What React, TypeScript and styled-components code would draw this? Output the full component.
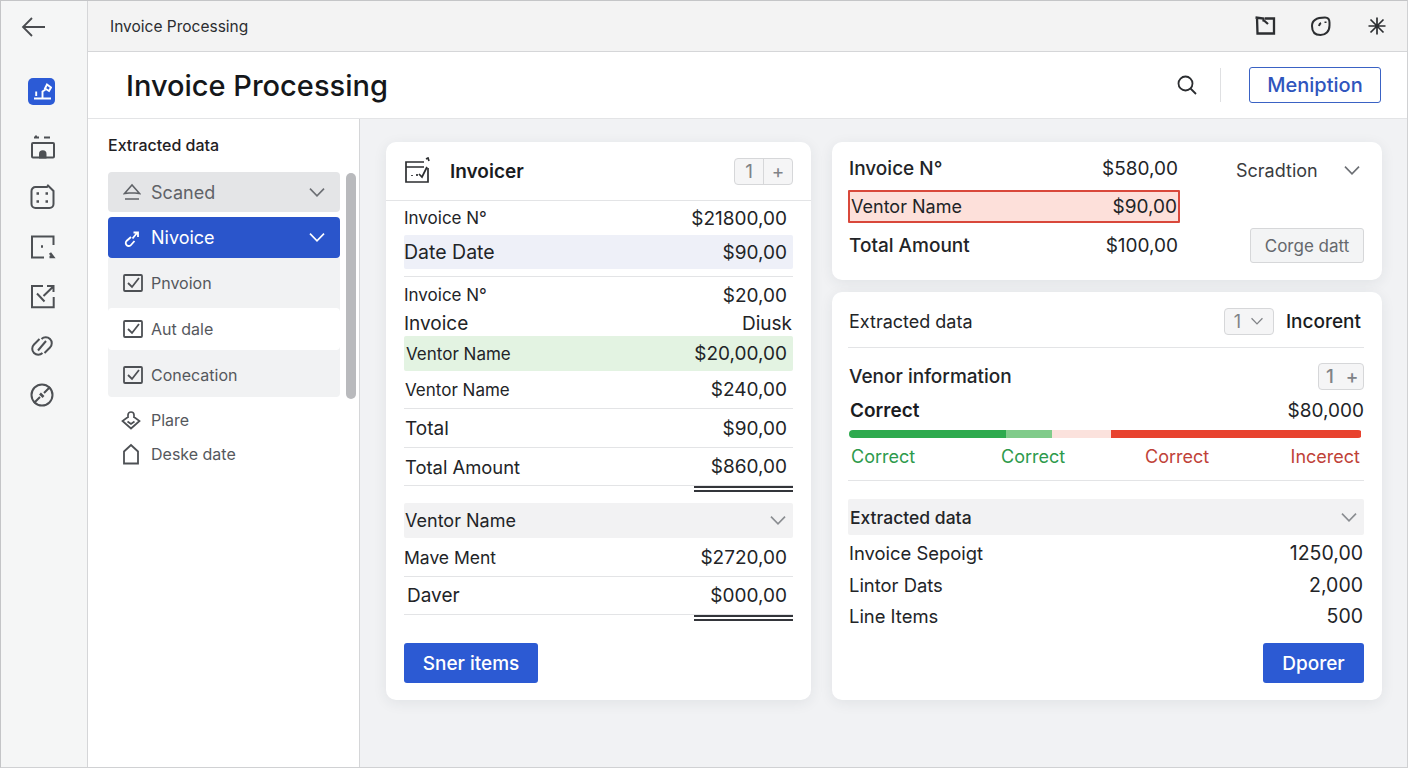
import React from "react";
import styled, { createGlobalStyle } from "styled-components";

const GlobalStyle = createGlobalStyle`
  html, body { margin: 0; padding: 0; height: 100%; }
  body { font-family: Inter, "Liberation Sans", sans-serif; color: #222427; background: #f1f2f4; }
  #root { height: 100%; }
  * { box-sizing: border-box; }
`;

const Frame = styled.div`
  width: 1408px;
  height: 768px;
  display: flex;
  overflow: hidden;
  border-top: 1px solid #c4c5c7;
  border-left: 1px solid #c4c5c7;
  border-right: 1px solid #d0d1d3;
  border-bottom: 1px solid #d0d1d3;
`;

const Rail = styled.aside`
  width: 87px;
  flex: none;
  background: #f5f6f6;
  border-right: 1px solid #d5d6d8;
  display: flex;
  flex-direction: column;
`;

const BackSlot = styled.div`
  height: 51px;
  padding-left: 20px;
  display: flex;
  align-items: center;
`;

const RailList = styled.nav`
  padding-top: 15px;
  padding-left: 27px;
  display: flex;
  flex-direction: column;
`;

const RailItem = styled.div<{ $lead?: boolean }>`
  height: 49.4px;
  margin-bottom: ${(p) => (p.$lead ? "7px" : "0")};
  display: flex;
  align-items: center;
`;

const RailTile = styled.div`
  width: 27px;
  height: 27px;
  border-radius: 5px;
  background: #2c5bd6;
  display: flex;
  align-items: center;
  justify-content: center;
`;

const Body = styled.div`
  flex: 1;
  min-width: 0;
  display: flex;
  flex-direction: column;
`;

const TopBar = styled.header`
  height: 51px;
  flex: none;
  background: #f3f3f3;
  border-bottom: 1px solid #d5d6d8;
  display: flex;
  align-items: center;
  justify-content: space-between;
  padding: 0 18px 0 22px;
  font-size: 15.5px;
  color: #2b2d30;
`;

const TopIcons = styled.div`
  display: flex;
  align-items: center;
  gap: 32px;
`;

const TitleBar = styled.div`
  height: 67px;
  flex: none;
  background: #fff;
  border-bottom: 1px solid #e3e4e6;
  display: flex;
  align-items: center;
  justify-content: space-between;
  padding: 0 26px 0 38px;
`;

const PageTitle = styled.h1`
  margin: 0;
  font-size: 29px;
  font-weight: 500;
  color: #15171a;
`;

const TitleTools = styled.div`
  display: flex;
  align-items: center;
`;

const ToolDivider = styled.div`
  width: 1px;
  height: 34px;
  background: #dfe0e2;
  margin: 0 28px 0 22px;
`;

const OutlineButton = styled.button`
  width: 132px;
  height: 36px;
  padding-bottom: 2px;
  border: 1px solid #3a62c4;
  border-radius: 3px;
  background: #fff;
  color: #2f55bd;
  font: 500 20px Inter, sans-serif;
`;

const Content = styled.div`
  flex: 1;
  min-height: 0;
  display: flex;
`;

const SidePanel = styled.section`
  width: 272px;
  flex: none;
  background: #fff;
  border-right: 1px solid #d5d6d8;
  padding: 16px 3px 0 20px;
`;

const SideHeading = styled.h2`
  margin: 0 0 17px;
  height: 20px;
  line-height: 20px;
  font-size: 16px;
  font-weight: 500;
  color: #1f2124;
`;

const SideColumns = styled.div`
  display: flex;
  gap: 6px;
  align-items: flex-start;
`;

const SideList = styled.div`
  width: 232px;
`;

const ScrollThumb = styled.div`
  width: 10px;
  height: 226px;
  margin-top: 1px;
  border-radius: 5px;
  background: #b9babd;
`;

const Select = styled.div<{ $active?: boolean }>`
  height: ${(p) => (p.$active ? "41px" : "40px")};
  margin-bottom: ${(p) => (p.$active ? "0" : "5px")};
  padding: 0 14px 0 15px;
  border-radius: 4px;
  display: flex;
  align-items: center;
  gap: 10px;
  font-size: 18px;
  background: ${(p) => (p.$active ? "#2a55cb" : "#e4e5e7")};
  color: ${(p) => (p.$active ? "#fff" : "#5f6267")};
`;

const Grow = styled.span`
  flex: 1;
`;

const CheckGroup = styled.div`
  height: 139px;
  padding-top: 4px;
  background: #f1f2f3;
  border-radius: 0 0 4px 4px;
  display: flex;
  flex-direction: column;
`;

const CheckRow = styled.div<{ $on?: boolean }>`
  height: 42px;
  margin: ${(p) => (p.$on ? "4px 0" : "0")};
  padding-left: 15px;
  border-radius: 4px;
  display: flex;
  align-items: center;
  gap: 8px;
  font-size: 16px;
  color: #55585d;
  background: ${(p) => (p.$on ? "#fff" : "transparent")};
`;

const PlainRow = styled.div<{ $gap: number }>`
  height: 30px;
  margin-top: ${(p) => p.$gap}px;
  padding-left: 13px;
  display: flex;
  align-items: center;
  gap: 10px;
  font-size: 16px;
  color: #55585d;
`;

const Main = styled.main`
  flex: 1;
  min-width: 0;
  padding: 23px 0 0 26px;
  display: grid;
  grid-template-columns: 425px 550px;
  grid-template-rows: 558px;
  gap: 21px;
  background: #f1f2f4;
`;

const Card = styled.section`
  background: #fff;
  border-radius: 10px;
  box-shadow: 0 3px 14px rgba(40, 50, 70, 0.08);
`;

const InvoiceCard = styled(Card)`
  padding: 0 18px;
`;

const InvoiceHeader = styled.div`
  height: 59px;
  margin: 0 -18px;
  padding: 0 18px;
  border-bottom: 1px solid #e3e4e6;
  display: flex;
  align-items: center;
`;

const InvoiceTitle = styled.h2`
  margin: 0 0 0 18px;
  flex: 1;
  font-size: 19px;
  font-weight: 600;
  color: #1a1c1f;
`;

const Stepper = styled.div<{ $w: number }>`
  width: ${(p) => p.$w}px;
  height: 27px;
  border: 1px solid #d6d7d9;
  border-radius: 4px;
  background: #f5f5f6;
  display: flex;
  align-items: center;
  color: #808387;
  font-size: 19px;
`;

const StepCell = styled.span<{ $line?: boolean }>`
  flex: 1;
  height: 100%;
  display: flex;
  align-items: center;
  justify-content: center;
  border-right: ${(p) => (p.$line ? "1px solid #d6d7d9" : "0")};
`;

const Row = styled.div<{
  $h: number;
  $bg?: string;
  $line?: boolean;
  $size?: number;
  $weight?: number;
  $pl?: number;
  $pr?: number;
}>`
  height: ${(p) => p.$h}px;
  padding: 0 ${(p) => p.$pr ?? 6}px 0 ${(p) => p.$pl ?? 0}px;
  display: flex;
  align-items: center;
  justify-content: space-between;
  font-size: ${(p) => p.$size ?? 17}px;
  font-weight: ${(p) => p.$weight ?? 400};
  color: #222427;
  background: ${(p) => p.$bg ?? "transparent"};
  border-bottom: ${(p) => (p.$line ? "1px solid #e3e4e6" : "0")};
  border-radius: ${(p) => (p.$bg ? "2px" : "0")};
`;

const Amount = styled.span<{ $size?: number }>`
  font-size: ${(p) => p.$size ?? 19}px;
  font-weight: 400;
`;

const Spacer = styled.div<{ $h: number }>`
  height: ${(p) => p.$h}px;
`;

const Divider = styled.div`
  height: 1px;
  background: #e3e4e6;
`;

const DoubleRule = styled.div`
  width: 99px;
  height: 6px;
  margin-left: auto;
  border-top: 2px solid #33353a;
  border-bottom: 2px solid #33353a;
`;

const SolidButton = styled.button<{ $w: number }>`
  width: ${(p) => p.$w}px;
  height: 40px;
  border: 0;
  border-radius: 3px;
  background: #2c5ad3;
  color: #fff;
  font: 500 19px Inter, sans-serif;
`;

const RightColumn = styled.div`
  display: flex;
  flex-direction: column;
  gap: 12px;
  min-height: 0;
`;

const SummaryCard = styled(Card)`
  height: 138px;
  padding: 10px 18px 0 16px;
  display: grid;
  grid-template-columns: 332px 1fr;
  column-gap: 56px;
`;

const SummaryLeft = styled.div`
  display: flex;
  flex-direction: column;
`;

const SummaryRight = styled.div`
  display: flex;
  flex-direction: column;
  align-items: flex-end;
`;

const AlertRow = styled(Row)`
  margin-top: 5px;
  background: #fde0da;
  border: 2px solid #d9483b;
  border-radius: 1px;
  padding: 0 1px;
`;

const ScopeRow = styled.div`
  width: 100%;
  height: 36px;
  padding-right: 3px;
  display: flex;
  align-items: center;
  justify-content: space-between;
  font-size: 18px;
  color: #3a3c40;
`;

const GhostButton = styled.button`
  width: 114px;
  height: 35px;
  margin-top: 40px;
  border: 1px solid #d6d7d9;
  border-radius: 3px;
  background: #f3f4f5;
  color: #65686d;
  font: 400 17px Inter, sans-serif;
`;

const DetailCard = styled(Card)`
  flex: 1;
  padding: 0 18px 0 16px;
  display: flex;
  flex-direction: column;
`;

const DetailHead = styled.div`
  height: 56px;
  padding: 3px 3px 0 1px;
  border-bottom: 1px solid #e3e4e6;
  display: flex;
  align-items: center;
  gap: 10px;
  font-size: 18px;
`;

const DetailHeadLabel = styled.span`
  flex: 1;
`;

const Pill = styled.div`
  width: 50px;
  height: 27px;
  margin-right: 2px;
  border: 1px solid #d6d7d9;
  border-radius: 4px;
  background: #f5f5f6;
  display: flex;
  align-items: center;
  justify-content: space-evenly;
  color: #808387;
  font-size: 18px;
`;

const Strong = styled.span`
  font-size: 19px;
  font-weight: 500;
  color: #1a1c1f;
`;

const StrongLabel = styled.span`
  font-weight: 600;
  color: #1a1c1f;
`;

const Meter = styled.div`
  height: 8px;
  margin: 6px 2px 0 1px;
  border-radius: 4px;
  overflow: hidden;
  display: flex;
`;

const MeterPart = styled.div<{ $w: number; $c: string }>`
  width: ${(p) => p.$w}px;
  background: ${(p) => p.$c};
`;

const MeterLabels = styled.div`
  height: 43px;
  padding: 8px 4px 0 3px;
  border-bottom: 1px solid #e3e4e6;
  display: flex;
  align-items: flex-start;
  font-size: 18px;
`;

const MeterLabel = styled.span<{ $w?: number; $c: string }>`
  width: ${(p) => (p.$w ? `${p.$w}px` : "auto")};
  flex: ${(p) => (p.$w ? "none" : "1")};
  text-align: ${(p) => (p.$w ? "left" : "right")};
  color: ${(p) => p.$c};
`;

const DetailFoot = styled.div`
  display: flex;
  justify-content: flex-end;
  margin-top: 9px;
`;

const BackIcon = () => (
  <svg width="25" height="22" viewBox="0 0 25 22" fill="none" stroke="#4a4c50" strokeWidth="1.8">
    <path d="M24 11H2M11 2l-9 9 9 9" />
  </svg>
);

const Chevron = ({ color = "#6c6f74", size = 18 }: { color?: string; size?: number }) => (
  <svg width={size} height={size * 0.6} viewBox="0 0 16 10" fill="none" stroke={color} strokeWidth="1.5">
    <path d="M1.5 1.5 8 8.2l6.5-6.7" />
  </svg>
);

const RailIcon = ({ children }: { children: React.ReactNode }) => (
  <svg width="28" height="28" viewBox="0 0 28 28" fill="none" stroke="#4d5054" strokeWidth="2">
    {children}
  </svg>
);

const CheckIcon = () => (
  <svg width="20" height="18" viewBox="0 0 20 18" fill="none" stroke="#4d5054" strokeWidth="1.8">
    <rect x="1" y="1" width="18" height="16" rx="1" />
    <path d="M5 9l4 4 7-9" />
  </svg>
);

const App: React.FC = () => {
  return (
    <>
      <GlobalStyle />
      <Frame>
        <Rail>
          <BackSlot>
            <BackIcon />
          </BackSlot>
          <RailList>
            <RailItem $lead>
              <RailTile>
                <svg width="20" height="20" viewBox="0 0 20 20" fill="none" stroke="#fff" strokeWidth="1.9">
                  <path d="M2 16.5h17M10.5 16V9.5l3-2M4.2 14V9.500" />
                  <path d="M15 2.500l4 3-2 3.500-4-2.500z" />
                </svg>
              </RailTile>
            </RailItem>
            <RailItem>
              <RailIcon>
                <rect x="4" y="9" width="22" height="14.500" rx="1" />
                <path d="M6 3.500h5M8 1.500v2M16 3.500h6" />
                <path d="M12 23.500v-3.500a2.500 2.500 0 0 1 5.500 0v3.500z" fill="#4d5054" />
              </RailIcon>
            </RailItem>
            <RailItem>
              <RailIcon>
                <path d="M7.500 4h11.500l1-1.500 5.500 5.500V21a4 4 0 0 1-4 4H7.500a4 4 0 0 1-4-4V8a4 4 0 0 1 4-4z" />
                <path d="M8.500 10.500h2.500M17.500 10.500H20M8.500 18.500h2.500M17.500 18.500H20" strokeWidth="2.600" />
              </RailIcon>
            </RailItem>
            <RailItem>
              <RailIcon>
                <path d="M16 24.500H4V3.500h21.500V12" />
                <path d="M13 13.500h2" strokeWidth="2.600" />
                <path d="M22 20l3 4h-3.500" strokeWidth="2.600" />
              </RailIcon>
            </RailItem>
            <RailItem>
              <RailIcon>
                <path d="M15 4H4v21.300h21.700V15" />
                <path d="M15.500 14 25 4.700M19 4h6.500v6M9 11.500l7.500 8" />
              </RailIcon>
            </RailItem>
            <RailItem>
              <RailIcon>
                <path d="M11.500 7 6 12.500a6 6 0 0 0 8.500 8.500" />
                <path d="M16.500 21 22 15.500A6 6 0 0 0 13.500 7" />
                <path d="M10 18.500 18 9" />
              </RailIcon>
            </RailItem>
            <RailItem>
              <RailIcon>
                <circle cx="14" cy="14" r="10.500" />
                <path d="M22 6l-6 6M12 16l-6 6" />
                <path d="M12 12.500l3.500 3.500" strokeWidth="2.600" />
              </RailIcon>
            </RailItem>
          </RailList>
        </Rail>
        <Body>
          <TopBar>
            <span>Invoice Processing</span>
            <TopIcons>
              <svg width="24" height="24" viewBox="0 0 24 24" fill="none" stroke="#2c2e31" strokeWidth="2.300">
                <path d="M2.500 3.500l8 1v3M4 3.500l.5 16H21V11" />
                <path d="M12 4.500h9V11M11 6.500l4 3.500" />
              </svg>
              <svg width="24" height="24" viewBox="0 0 24 24" fill="none" stroke="#2c2e31" strokeWidth="2">
                <path d="M16 3.500c3 0 4.500 2 4.500 5v3c0 6-4 9.500-9 9.500S3 18 3 12s4-8.500 13-8.500z" />
                <path d="M10 12c.3-1.500 1-2.500 2-3M16.500 7.500V9" />
              </svg>
              <svg width="24" height="24" viewBox="0 0 24 24" fill="none" stroke="#2c2e31" strokeWidth="1.700">
                <path d="M12 3.500v17M3.500 12h17M5.500 5.500l13 13M18.500 5.500l-13 13" />
              </svg>
            </TopIcons>
          </TopBar>
          <TitleBar>
            <PageTitle>Invoice Processing</PageTitle>
            <TitleTools>
              <svg width="22" height="22" viewBox="0 0 22 22" fill="none" stroke="#2b2d30" strokeWidth="1.800">
                <circle cx="9.500" cy="9.500" r="7" />
                <path d="M14.500 14.500 20 20" />
              </svg>
              <ToolDivider />
              <OutlineButton>Meniption</OutlineButton>
            </TitleTools>
          </TitleBar>
          <Content>
            <SidePanel>
              <SideHeading>Extracted data</SideHeading>
              <SideColumns>
                <SideList>
                  <Select>
                    <svg width="18" height="18" viewBox="0 0 18 18" fill="none" stroke="#5f6267" strokeWidth="1.500">
                      <path d="M1.500 10.500 9 2l7.500 8.500-4.500-.5H6zM2 16h14" />
                    </svg>
                    <Grow>Scaned</Grow>
                    <Chevron />
                  </Select>
                  <Select $active>
                    <svg width="18" height="18" viewBox="0 0 18 18" fill="none" stroke="#fff" strokeWidth="1.800">
                      <path d="M8 8 3.500 12a3 3 0 0 0 4.500 4l3.500-4" />
                      <path d="M10.500 3.500H15V8M9.500 9.500 14 4" />
                    </svg>
                    <Grow>Nivoice</Grow>
                    <Chevron color="#fff" />
                  </Select>
                  <CheckGroup>
                    <CheckRow>
                      <CheckIcon />
                      Pnvoion
                    </CheckRow>
                    <CheckRow $on>
                      <CheckIcon />
                      Aut dale
                    </CheckRow>
                    <CheckRow>
                      <CheckIcon />
                      Conecation
                    </CheckRow>
                  </CheckGroup>
                  <PlainRow $gap={8}>
                    <svg width="20" height="20" viewBox="0 0 20 20" fill="none" stroke="#4d5054" strokeWidth="1.700">
                      <path d="M7 8V5a3 3 0 0 1 6 0v3M7 7l-5.500 4L10 18.500l8.500-7.500L13 7M6.500 11.500 10 14l3.500-2.500" />
                    </svg>
                    Plare
                  </PlainRow>
                  <PlainRow $gap={4}>
                    <svg width="20" height="22" viewBox="0 0 20 22" fill="none" stroke="#4d5054" strokeWidth="1.800">
                      <path d="M3 20.500V8.500l7-6.500 7 6.500v12z" />
                    </svg>
                    Deske date
                  </PlainRow>
                </SideList>
                <ScrollThumb />
              </SideColumns>
            </SidePanel>
            <Main>
              <InvoiceCard>
                <InvoiceHeader>
                  <svg width="28" height="28" viewBox="0 0 28 28" fill="none" stroke="#2c2e31" strokeWidth="1.700">
                    <path d="M20 5H2v20h22V11" />
                    <path d="M2 10h18M8 19v-1M13 19v-2M15 17l3 3 5-10M22 2l2-1 1 3" />
                  </svg>
                  <InvoiceTitle>Invoicer</InvoiceTitle>
                  <Stepper $w={59}>
                    <StepCell $line>1</StepCell>
                    <StepCell>+</StepCell>
                  </Stepper>
                </InvoiceHeader>
                <Row $h={34}>
                  <span>Invoice N°</span>
                  <Amount>$21800,00</Amount>
                </Row>
                <Row $h={34} $bg="#eef0f8" $size={19.500}>
                  <span>Date Date</span>
                  <Amount>$90,00</Amount>
                </Row>
                <Spacer $h={7} />
                <Divider />
                <Row $h={36}>
                  <span>Invoice N°</span>
                  <Amount>$20,00</Amount>
                </Row>
                <Row $h={20} $size={19} $pr={1}>
                  <span>Invoice</span>
                  <span>Diusk</span>
                </Row>
                <Spacer $h={3} />
                <Row $h={35} $bg="#e3f3e2" $pl={2}>
                  <span>Ventor Name</span>
                  <Amount>$20,00,00</Amount>
                </Row>
                <Row $h={38} $line $pl={1}>
                  <span>Ventor Name</span>
                  <Amount>$240,00</Amount>
                </Row>
                <Row $h={39} $line $size={19} $pl={1}>
                  <span>Total</span>
                  <Amount>$90,00</Amount>
                </Row>
                <Row $h={38} $line $size={18.400} $pl={1}>
                  <span>Total Amount</span>
                  <Amount>$860,00</Amount>
                </Row>
                <DoubleRule />
                <Spacer $h={11} />
                <Row $h={35} $bg="#f2f2f3" $size={18} $pl={1}>
                  <span>Ventor Name</span>
                  <Chevron color="#8a8d91" />
                </Row>
                <Row $h={39} $line $size={17.500}>
                  <span>Mave Ment</span>
                  <Amount>$2720,00</Amount>
                </Row>
                <Row $h={38} $line $size={19} $pl={3}>
                  <span>Daver</span>
                  <Amount>$000,00</Amount>
                </Row>
                <DoubleRule />
                <Spacer $h={22} />
                <SolidButton $w={134}>Sner items</SolidButton>
              </InvoiceCard>
              <RightColumn>
                <SummaryCard>
                  <SummaryLeft>
                    <Row $h={33} $size={19} $weight={500} $pl={1} $pr={2}>
                      <span>Invoice N°</span>
                      <Amount>$580,00</Amount>
                    </Row>
                    <AlertRow $h={33} $size={18}>
                      <span>Ventor Name</span>
                      <Amount>$90,00</Amount>
                    </AlertRow>
                    <Row $h={44} $size={19} $weight={500} $pl={1} $pr={2}>
                      <span>Total Amount</span>
                      <Amount>$100,00</Amount>
                    </Row>
                  </SummaryLeft>
                  <SummaryRight>
                    <ScopeRow>
                      Scradtion
                      <Chevron />
                    </ScopeRow>
                    <GhostButton>Corge datt</GhostButton>
                  </SummaryRight>
                </SummaryCard>
                <DetailCard>
                  <DetailHead>
                    <DetailHeadLabel>Extracted data</DetailHeadLabel>
                    <Pill>
                      1
                      <Chevron color="#808387" size={14} />
                    </Pill>
                    <Strong>Incorent</Strong>
                  </DetailHead>
                  <Row $h={56} $size={19} $weight={500} $pl={1} $pr={0}>
                    <span>Venor information</span>
                    <Stepper $w={46}>
                      <StepCell>1</StepCell>
                      <StepCell>+</StepCell>
                    </Stepper>
                  </Row>
                  <Row $h={13} $size={19} $pl={2} $pr={0}>
                    <StrongLabel>Correct</StrongLabel>
                    <Amount>$80,000</Amount>
                  </Row>
                  <Spacer $h={7} />
                  <Meter>
                    <MeterPart $w={157} $c="#2eaa4e" />
                    <MeterPart $w={46} $c="#80cb8a" />
                    <MeterPart $w={59} $c="#fbe2dd" />
                    <MeterPart $w={250} $c="#e8432f" />
                  </Meter>
                  <MeterLabels>
                    <MeterLabel $w={150} $c="#2e9a4c">Correct</MeterLabel>
                    <MeterLabel $w={144} $c="#2e9a4c">Correct</MeterLabel>
                    <MeterLabel $w={100} $c="#bf4238">Correct</MeterLabel>
                    <MeterLabel $c="#bf4238">Incerect</MeterLabel>
                  </MeterLabels>
                  <Spacer $h={18} />
                  <Row $h={36} $bg="#f2f2f3" $size={17.500} $weight={500} $pl={2}>
                    <span>Extracted data</span>
                    <Chevron color="#8a8d91" />
                  </Row>
                  <Row $h={36} $size={18.400} $pl={1} $pr={1}>
                    <span>Invoice Sepoigt</span>
                    <Amount $size={19.500}>1250,00</Amount>
                  </Row>
                  <Row $h={27} $size={18.400} $pl={1} $pr={1}>
                    <span>Lintor Dats</span>
                    <Amount $size={19.500}>2,000</Amount>
                  </Row>
                  <Row $h={36} $size={18.400} $pl={1} $pr={1}>
                    <span>Line Items</span>
                    <Amount $size={19.500}>500</Amount>
                  </Row>
                  <DetailFoot>
                    <SolidButton $w={101}>Dporer</SolidButton>
                  </DetailFoot>
                </DetailCard>
              </RightColumn>
            </Main>
          </Content>
        </Body>
      </Frame>
    </>
  );
};

export default App;
